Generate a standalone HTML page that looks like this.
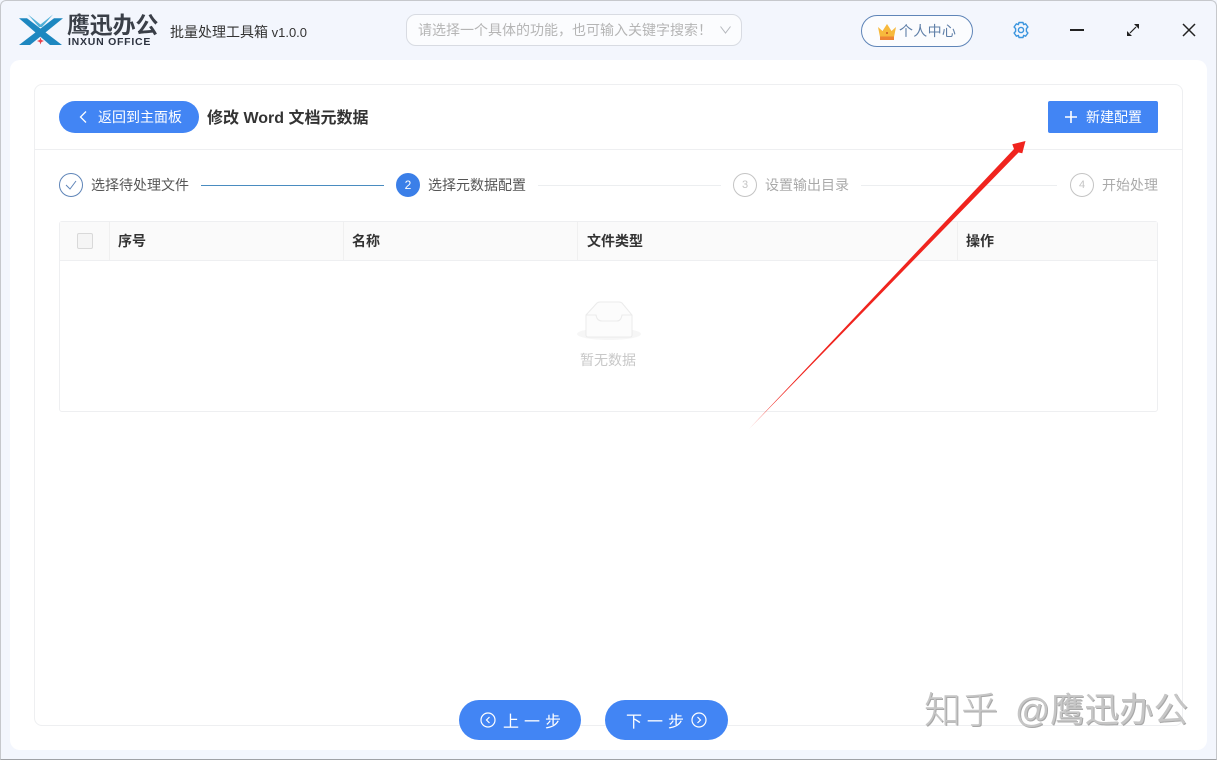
<!DOCTYPE html>
<html><head><meta charset="utf-8"><style>
*{box-sizing:border-box;margin:0;padding:0}
html,body{width:1217px;height:760px;overflow:hidden;background:#f3f6fd;font-family:"Liberation Sans","Noto Sans CJK SC",sans-serif}
.a{position:absolute;white-space:nowrap}
.c{display:flex;align-items:center;justify-content:center}
.st{font-size:14px;line-height:20px;top:175px;color:#555}
.g{color:#aaa}
.n{top:173px;width:24px;height:24px;border-radius:50%;border:1px solid #c4c4c4;font-size:11px;color:#c4c4c4}
.th{top:232px;font-size:14px;font-weight:bold;line-height:18px;color:#333}
.sep{top:222px;width:1px;height:38px;background:#f0f0f0}
.btn{background:#4285f4;color:#fff;border-radius:20px;top:700px;height:40px;font-size:16px;letter-spacing:5px}
</style></head><body>
<div class="a" style="left:0;top:0;width:1217px;height:760px;border:1px solid #c6c8cc;border-bottom:1px solid #a0a2a6;border-radius:6px 6px 0 0"></div>

<svg class="a" style="left:18px;top:14px" width="46" height="32" viewBox="0 0 46 32">
<path d="M10 .5L22.500 10.500L35 .5L24 13H21Z" fill="#4fb0d8"/>
<path d="M1 4.300H9L44 31H32Z" fill="#1d87c0"/>
<path d="M45 4.300H36L1 31H12Z" fill="#1d87c0"/>
<path d="M22.500 23.500L23.400 26L26 27L23.400 28L22.500 30.500L21.600 28L19 27L21.600 26Z" fill="#e8414b"/>
</svg>
<div class="a" style="left:67px;top:11px;font-size:23px;line-height:28px;font-weight:bold;color:#3a3f48;letter-spacing:-.2px">鹰迅办公</div>
<div class="a" style="left:68px;top:36px;font-size:10.500px;line-height:12px;font-weight:bold;color:#2d3340;letter-spacing:.75px">INXUN OFFICE</div>
<div class="a" style="left:170px;top:23px;font-size:14px;line-height:19px;color:#333">批量处理工具箱<span style="font-size:13px"> v1.0.0</span></div>

<div class="a" style="left:406px;top:14px;width:336px;height:32px;border:1px solid #d8dbe2;border-radius:10px;background:#fbfcfe"></div>
<div class="a" style="left:418px;top:20px;font-size:14px;line-height:20px;color:#b5b5b5">请选择一个具体的功能，也可输入关键字搜索！</div>
<svg class="a" style="left:719px;top:25px" width="13" height="10"><path d="M1.500 1.500L6.500 8L11.500 1.500" fill="none" stroke="#b5b8bd" stroke-width="1"/></svg>

<div class="a" style="left:861px;top:15px;width:112px;height:32px;border:1px solid #5f85b8;border-radius:16px;background:#fbfcfe"></div>
<svg class="a" style="left:877px;top:23px" width="20" height="18" viewBox="0 0 20 18">
<path d="M1 4L5.500 8L10 1L14.500 8L19 4L17 14H3Z" fill="#f7b93c"/><rect x="3" y="13.500" width="14" height="3.500" fill="#ee8433"/><circle cx="10" cy="10" r="1" fill="#c8541f"/></svg>
<div class="a" style="left:899px;top:21px;font-size:14px;line-height:20px;color:#5f7fa8;letter-spacing:.3px">个人中心</div>
<svg class="a" style="left:1012px;top:21px" width="18" height="18" viewBox="0 0 18 18" fill="none" stroke="#3b95de" stroke-width="1.400">
<path d="M7 1.500H11L11.600 3.600L13.600 2.800L15.900 6L14.400 7.600V10.400L15.900 12L13.600 15.200L11.600 14.400L11 16.500H7L6.400 14.400L4.400 15.200L2.100 12L3.600 10.400V7.600L2.100 6L4.400 2.800L6.400 3.600Z" stroke-linejoin="round"/><circle cx="9" cy="9" r="2.600"/></svg>
<div class="a" style="left:1070px;top:29px;width:14px;height:2px;background:#222"></div>
<svg class="a" style="left:1125px;top:22px" width="16" height="16" viewBox="0 0 16 16"><path d="M5 11L11 5" stroke="#222" stroke-width="1.200"/><path d="M9 2H14V7Z M2 9V14H7Z" fill="#222"/></svg>
<svg class="a" style="left:1181px;top:22px" width="16" height="16" viewBox="0 0 16 16"><path d="M2 2L14 14M14 2L2 14" stroke="#222" stroke-width="1.500"/></svg>

<div class="a" style="left:10px;top:60px;width:1197px;height:690px;background:#fff;border-radius:10px"></div>
<div class="a" style="left:34px;top:84px;width:1149px;height:642px;border:1px solid #eeeff1;border-radius:8px"></div>
<div class="a" style="left:35px;top:149px;width:1147px;height:1px;background:#eeeff1"></div>

<div class="a c" style="left:59px;top:101px;width:140px;height:32px;border-radius:16px;background:#4285f4;color:#fff;font-size:14px;padding:0 0 1px 22px">返回到主面板</div>
<svg class="a" style="left:78px;top:110px" width="10" height="14"><path d="M8 1.500L2.500 7L8 12.500" fill="none" stroke="#fff" stroke-width="1.300"/></svg>
<div class="a" style="left:207px;top:107px;font-size:16px;line-height:24px;font-weight:bold;color:#333">修改 Word 文档元数据</div>

<div class="a c" style="left:1048px;top:101px;width:110px;height:32px;border-radius:2px;background:#4285f4;color:#fff;font-size:14px;padding:0 0 1px 22px">新建配置</div>
<svg class="a" style="left:1065px;top:111px" width="12" height="12"><path d="M6 0V12M0 6H12" stroke="#fff" stroke-width="1.600"/></svg>

<div class="a c n" style="left:59px;border-color:#5f85b8"><svg width="14" height="12"><path d="M2 6L6 10L12 2" fill="none" stroke="#5f85b8" stroke-width="1"/></svg></div>
<div class="a st" style="left:91px">选择待处理文件</div>
<div class="a" style="left:201px;top:185px;width:183px;height:1px;background:#4a8cc0"></div>
<div class="a c n" style="left:396px;background:#3b7fe8;border-color:#3b7fe8;color:#fff;font-size:12px">2</div>
<div class="a st" style="left:428px">选择元数据配置</div>
<div class="a" style="left:538px;top:185px;width:183px;height:1px;background:#eceef0"></div>
<div class="a c n" style="left:733px">3</div>
<div class="a st g" style="left:765px">设置输出目录</div>
<div class="a" style="left:861px;top:185px;width:196px;height:1px;background:#eceef0"></div>
<div class="a c n" style="left:1070px">4</div>
<div class="a st g" style="left:1102px">开始处理</div>

<div class="a" style="left:59px;top:221px;width:1099px;height:191px;border:1px solid #eeeff1;border-radius:3px"></div>
<div class="a" style="left:60px;top:222px;width:1097px;height:38px;background:#fafafa"></div>
<div class="a" style="left:60px;top:260px;width:1097px;height:1px;background:#eeeff1"></div>
<div class="a" style="left:77px;top:233px;width:16px;height:16px;border:1px solid #d9d9d9;border-radius:2px;background:#f5f5f5"></div>
<div class="a sep" style="left:109px"></div><div class="a sep" style="left:343px"></div><div class="a sep" style="left:577px"></div><div class="a sep" style="left:957px"></div>
<div class="a th" style="left:118px">序号</div>
<div class="a th" style="left:352px">名称</div>
<div class="a th" style="left:587px">文件类型</div>
<div class="a th" style="left:966px">操作</div>

<svg class="a" style="left:576px;top:300px" width="66" height="44" viewBox="0 0 66 44">
<ellipse cx="33" cy="34" rx="32" ry="6" fill="#f6f6f6"/>
<path d="M10 15L21 3Q22 2 24 2H43Q45 2 46 3L56 15V35Q56 37 54 37H12Q10 37 10 35Z" fill="#fcfcfc" stroke="#ebebeb"/>
<path d="M10 15H20Q21 21 26 21H41Q45 21 46 15H56" fill="none" stroke="#ebebeb"/></svg>
<div class="a" style="left:580px;top:350px;font-size:14px;line-height:20px;color:#c8c8c8">暂无数据</div>

<div class="a c btn" style="left:459px;width:122px;padding-left:29px">上一步</div>
<svg class="a" style="left:480px;top:712px" width="16" height="16" viewBox="0 0 16 16" fill="none" stroke="#fff" stroke-width="1.200"><circle cx="8" cy="8" r="7"/><path d="M9.500 5L6.500 8L9.500 11"/></svg>
<div class="a c btn" style="left:605px;width:123px;padding-right:18px">下一步</div>
<svg class="a" style="left:691px;top:712px" width="16" height="16" viewBox="0 0 16 16" fill="none" stroke="#fff" stroke-width="1.200"><circle cx="8" cy="8" r="7"/><path d="M6.500 5L9.500 8L6.500 11"/></svg>

<svg class="a" style="left:0;top:0" width="1217" height="760"><path d="M749 429L1014 149L1012.300 144.300L1025.500 141L1022.300 153.300L1018.500 152.500Z" fill="#f0241e"/></svg>

<div class="a" style="left:924px;top:690px;font-size:37px;line-height:42px;font-weight:300;color:#c6c6c6;text-shadow:1px 1px 0 #a8a8a8,-1px -1px 0 #fff">知乎</div>
<div class="a" style="left:1015px;top:691px;font-size:34.500px;line-height:40px;color:#c6c6c6;text-shadow:1px 1px 0 #a8a8a8,-1px -1px 0 #fff">@鹰迅办公</div>
</body></html>
